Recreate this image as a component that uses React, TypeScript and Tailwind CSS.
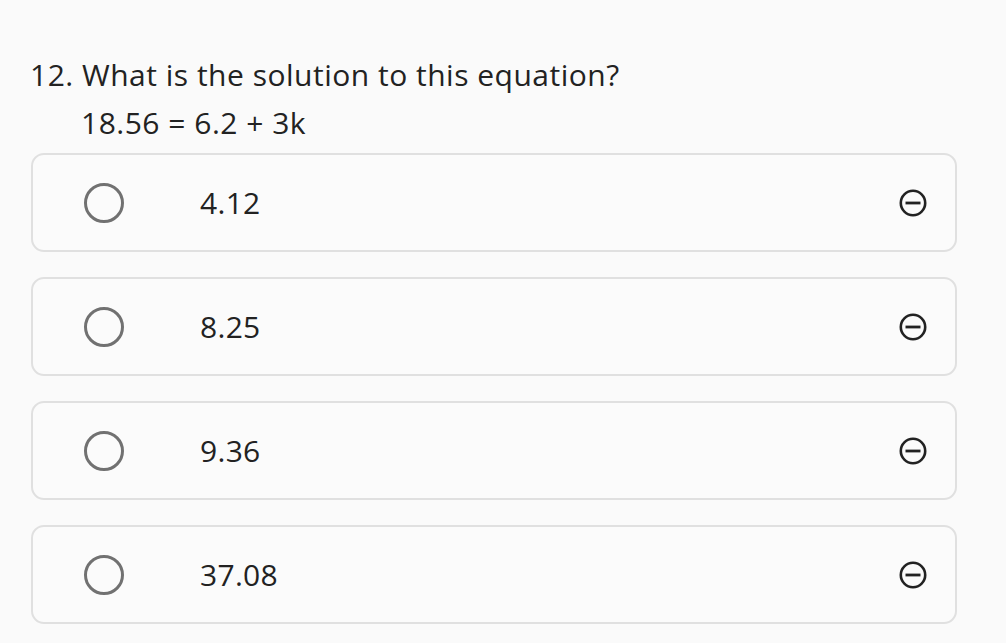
import React from "react";

const options = ["4.12", "8.25", "9.36", "37.08"];

function MinusCircle() {
  return (
    <svg width="28" height="28" viewBox="0 0 28 28" fill="none">
      <circle cx="14" cy="14" r="12.2" stroke="#222" strokeWidth="2.6" />
      <line x1="6.5" y1="14" x2="21.5" y2="14" stroke="#222" strokeWidth="2.8" />
    </svg>
  );
}

export default function App() {
  return (
    <div
      className="w-[1006px] h-[643px] bg-[#fafafa] text-[#222] overflow-hidden"
      style={{ fontFamily: '"Open Sans", "Noto Sans", sans-serif' }}
    >
      <div className="pl-[31px] pt-[51px] w-[957px]">
        <div className="text-[30px] leading-[48px] tracking-[0.5px] -ml-[1px]">12. What is the solution to this equation?</div>
        <div className="text-[30px] leading-[48px] pl-[50px] tracking-[0.5px]">18.56 = 6.2 + 3k</div>
        <div className="mt-[6px] flex flex-col gap-[25px]">
          {options.map((o) => (
            <div
              key={o}
              className="h-[99px] rounded-[13px] border-2 border-[#e0e0e0] bg-[#fbfbfb] flex items-center pl-[51px] pr-[28px]"
            >
              <div className="w-[40px] h-[40px] rounded-full border-[3.5px] border-[#717171] shrink-0" />
              <div className="ml-[76px] text-[30px] tracking-[0.3px]">{o}</div>
              <div className="ml-auto">
                <MinusCircle />
              </div>
            </div>
          ))}
        </div>
      </div>
    </div>
  );
}
